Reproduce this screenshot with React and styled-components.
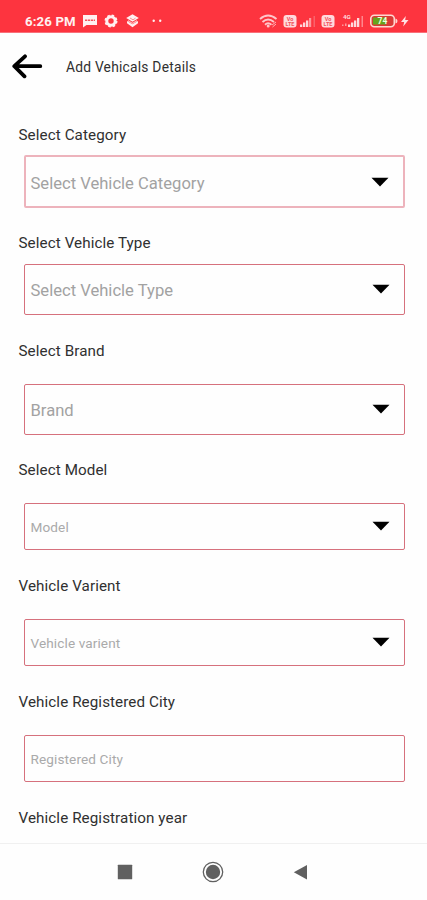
import React from 'react';
import styled, { createGlobalStyle } from 'styled-components';

const GlobalStyle = createGlobalStyle`
    * {
        box-sizing: border-box;
    }
    body {
        margin: 0;
        background-color: #fefefe;
        font-family: Roboto, 'Liberation Sans', sans-serif;
    }
`;
const Screen = styled.div`
    width: 100%;
    height: 900px;
    display: flex;
    flex-direction: column;
    overflow: hidden;
`;
const StatusBar = styled.div`
    height: 33px;
    flex-shrink: 0;
    padding: 9px 18px 0 25px;
    display: flex;
    justify-content: space-between;
    background-color: #fd343f;
    border-bottom: 1px solid #f8707a;
    color: #fff0f0;
`;
const StatusGroup = styled.div`
    height: 24px;
    display: flex;
    align-items: center;
`;
const Time = styled.span`
    width: 58px;
    font-size: 13.2px;
    font-weight: 700;
    letter-spacing: 0.15px;
    white-space: nowrap;
`;
const StatusIcon = styled.svg`
    display: block;
    height: 16px;
    width: ${(props) => props.$width}px;
    margin-left: ${(props) => props.$gap || 0}px;
    fill: currentColor;
`;
const Header = styled.div`
    height: 67px;
    flex-shrink: 0;
    padding-left: 12px;
    display: flex;
    align-items: center;
`;
const BackButton = styled.button`
    width: 54px;
    height: 30px;
    padding: 0;
    border: none;
    background: none;
    cursor: pointer;
`;
const Title = styled.h1`
    margin: 0;
    font-size: 13.8px;
    font-weight: 400;
    letter-spacing: 0.23px;
    color: #303030;
`;
const Form = styled.form`
    flex: 1;
    min-height: 0;
    overflow: hidden;
    padding: 24px 22.5px 0 18.5px;
`;
const Field = styled.div`
    height: ${(props) => props.$height}px;
`;
const Label = styled.label`
    display: block;
    height: 20px;
    line-height: 22px;
    margin-bottom: ${(props) => props.$space}px;
    font-size: 15.2px;
    letter-spacing: 0.09px;
    color: #303030;
`;
const Box = styled.div`
    height: ${(props) => props.$height}px;
    margin-left: 5px;
    padding: ${(props) => (props.$soft ? '2px 14px 0 5px' : '0 14px 0 6px')};
    display: flex;
    align-items: center;
    justify-content: space-between;
    border: ${(props) => (props.$soft ? '2px solid #edb3bc' : '1.5px solid #d6717d')};
    border-radius: 2px;
`;
const Placeholder = styled.span`
    padding-top: ${(props) => (props.$small ? 0 : 1)}px;
    font-size: ${(props) => (props.$small ? 13.6 : 16.6)}px;
    letter-spacing: ${(props) => (props.$small ? 0.1 : 0)}px;
    color: ${(props) => (props.$small ? '#aaaaaa' : '#a2a2a2')};
`;
const Caret = styled.svg`
    width: 18px;
    height: 10px;
    margin-bottom: 1px;
`;
const NavBar = styled.div`
    height: 57px;
    flex-shrink: 0;
    padding-right: 1px;
    display: flex;
    align-items: center;
    justify-content: center;
    gap: 66px;
    border-top: 1px solid #f0f0f0;
`;
const NavIcon = styled.svg`
    width: 22px;
    height: 22px;
    fill: #606060;
`;

const fields = [
    { label: 'Select Category', text: 'Select Vehicle Category', height: 108, space: 11, box: 53, soft: true, caret: true },
    { label: 'Select Vehicle Type', text: 'Select Vehicle Type', height: 108, space: 12, box: 51, caret: true },
    { label: 'Select Brand', text: 'Brand', height: 119, space: 24, box: 51, caret: true },
    { label: 'Select Model', text: 'Model', height: 116, space: 24, box: 47, small: true, caret: true },
    { label: 'Vehicle Varient', text: 'Vehicle varient', height: 116, space: 24, box: 47, small: true, caret: true },
    { label: 'Vehicle Registered City', text: 'Registered City', height: 116, space: 24, box: 47, small: true },
    { label: 'Vehicle Registration year', height: 20, space: 0 },
];

const Volte = ({ gap }) => (
    <StatusIcon $width={14} $gap={gap} viewBox="0 0 14 16">
        <rect x="0.5" y="2" width="13" height="12.5" rx="3" fill="#ffdadd" />
        <g fill="#f0525c" fontSize="5.5" fontWeight="700" textAnchor="middle">
            <text x="7" y="7.5">Vo</text>
            <text x="7" y="12.8">LTE</text>
        </g>
    </StatusIcon>
);

const StatusIcons = () => (
    <StatusGroup>
        <StatusIcon $width={19} viewBox="0 0 19 16">
            <g fill="none" stroke="#ffc6ca" strokeWidth="1.9">
                <path d="M1 6Q9 -1 17.5 6" />
                <path d="M3.5 9Q9 4 15 9" />
                <path d="M6 11.7Q9 9 12.5 11.7" />
            </g>
            <circle cx="9.2" cy="13" r="1.5" fill="#ffc6ca" />
            <path d="M13 12l4-3M13.5 14l3.5-3" stroke="#ffb0b5" />
        </StatusIcon>
        <Volte gap={5} />
        <StatusIcon $width={16} $gap={3} viewBox="0 0 16 16">
            <path d="M0 11.5h2.3V14H0zM3 9.5h2.3V14H3zM6 7.5h2.3V14H6z" fill="#ffd6d9" />
            <path d="M9 5h2.2v9H9z" fill="#ff979d" />
            <path d="M13.5 3h1.5v11h-1.5z" fill="#f9626b" />
        </StatusIcon>
        <Volte gap={5} />
        <StatusIcon $width={22} $gap={7} viewBox="0 0 22 16">
            <text x="1" y="5.6" fontSize="6.2" fontWeight="700" fill="#ffdadd">4G</text>
            <path d="M0 11.5h1.5V13H0zM3 10.5h1.5V13H3z" fill="#ff979d" />
            <path d="M6 11.5h2.3V14H6zM9 9.5h2.3V14H9zM12 7.5h2.3V14H12zM15 5h2.3v9H15z" fill="#ffdadd" />
            <path d="M19.5 3H21v11h-1.5z" fill="#ff868d" />
        </StatusIcon>
        <StatusIcon $width={28} $gap={6} viewBox="0 0 28 16">
            <rect x="0.8" y="2.3" width="23.5" height="11.5" rx="3.5" fill="#d93a37" stroke="#ffd9d2" strokeWidth="1.6" />
            <path d="M3 4.5h13v7H3z" fill="#65a51d" />
            <path d="M25.5 5.5q2 .5 2 2.5t-2 2.5z" fill="#ffd9d2" />
            <text x="12.5" y="11.1" fontSize="8.5" fontWeight="700" textAnchor="middle" fill="#f4ffdc">74</text>
        </StatusIcon>
        <StatusIcon $width={8} $gap={3} viewBox="0 0 8 16">
            <path d="M4.8 3L0 9h3.2L2.2 13.5 7.5 7H4.2z" fill="#ffe1e3" />
        </StatusIcon>
    </StatusGroup>
);

const Notifications = () => (
    <StatusGroup>
        <Time>6:26 PM</Time>
        <StatusIcon $width={14} viewBox="0 0 14 16">
            <path d="M0 2h14v10H3.5L0 14.5z" />
            <path d="M2 7.2h10" stroke="#f5525c" strokeWidth="1.5" strokeDasharray="2.2 .7" />
        </StatusIcon>
        <StatusIcon $width={14} $gap={7} viewBox="0 0 14 16">
            <circle cx="7" cy="8" r="4.2" fill="none" stroke="currentColor" strokeWidth="3" />
            <circle cx="7" cy="8" r="5.7" fill="none" stroke="currentColor" strokeWidth="1.6" strokeDasharray="2.5 1.98" />
        </StatusIcon>
        <StatusIcon $width={13} $gap={8} viewBox="0 0 13 16">
            <path d="M6.5 1.3L12.8 5 6.5 8.7.2 5z" />
            <path d="M1 8l5.5 3.3L12 8v2.2l-5.5 4-5.5-4z" />
            <path d="M2 7l4.5 2.7L11 7v1.5L6.5 11 2 8.5z" opacity=".7" />
            <path d="M4 5l3 1.8L9.5 5.2" fill="none" stroke="#f77780" strokeWidth=".8" />
        </StatusIcon>
        <StatusIcon $width={10} $gap={13} viewBox="0 0 10 16">
            <circle cx="1.7" cy="7.8" r="1.2" />
            <circle cx="8.2" cy="7.8" r="1.2" />
        </StatusIcon>
    </StatusGroup>
);

const App = () => {
    return (
        <Screen>
            <GlobalStyle />
            <StatusBar>
                <Notifications />
                <StatusIcons />
            </StatusBar>
            <Header>
                <BackButton aria-label="Back">
                    <svg width="54" height="30" viewBox="0 0 54 30" fill="none" stroke="#000" strokeWidth="3.8" strokeLinecap="round" strokeLinejoin="round">
                        <path d="M13 4.3L2.3 14.2 12.5 24.3M2.8 14.2h25.5" />
                    </svg>
                </BackButton>
                <Title>Add Vehicals Details</Title>
            </Header>
            <Form>
                {fields.map((field) => (
                    <Field key={field.label} $height={field.height}>
                        <Label $space={field.space}>{field.label}</Label>
                        {field.box && (
                            <Box $height={field.box} $soft={field.soft}>
                                <Placeholder $small={field.small}>{field.text}</Placeholder>
                                {field.caret && (
                                    <Caret viewBox="0 0 18 10">
                                        <path d="M0.5 0.7h17L9 9.6z" fill="#000" />
                                    </Caret>
                                )}
                            </Box>
                        )}
                    </Field>
                ))}
            </Form>
            <NavBar>
                <NavIcon viewBox="0 0 22 22">
                    <rect x="3.8" y="3.8" width="14.4" height="14.4" rx="0.5" />
                </NavIcon>
                <NavIcon viewBox="0 0 22 22">
                    <circle cx="11" cy="11" r="9.7" fill="none" stroke="#606060" strokeWidth="1.3" />
                    <circle cx="11" cy="11" r="7.2" />
                </NavIcon>
                <NavIcon viewBox="0 0 22 22">
                    <path d="M17 4v14.5L3.8 11.2z" />
                </NavIcon>
            </NavBar>
        </Screen>
    );
};

export default App;
